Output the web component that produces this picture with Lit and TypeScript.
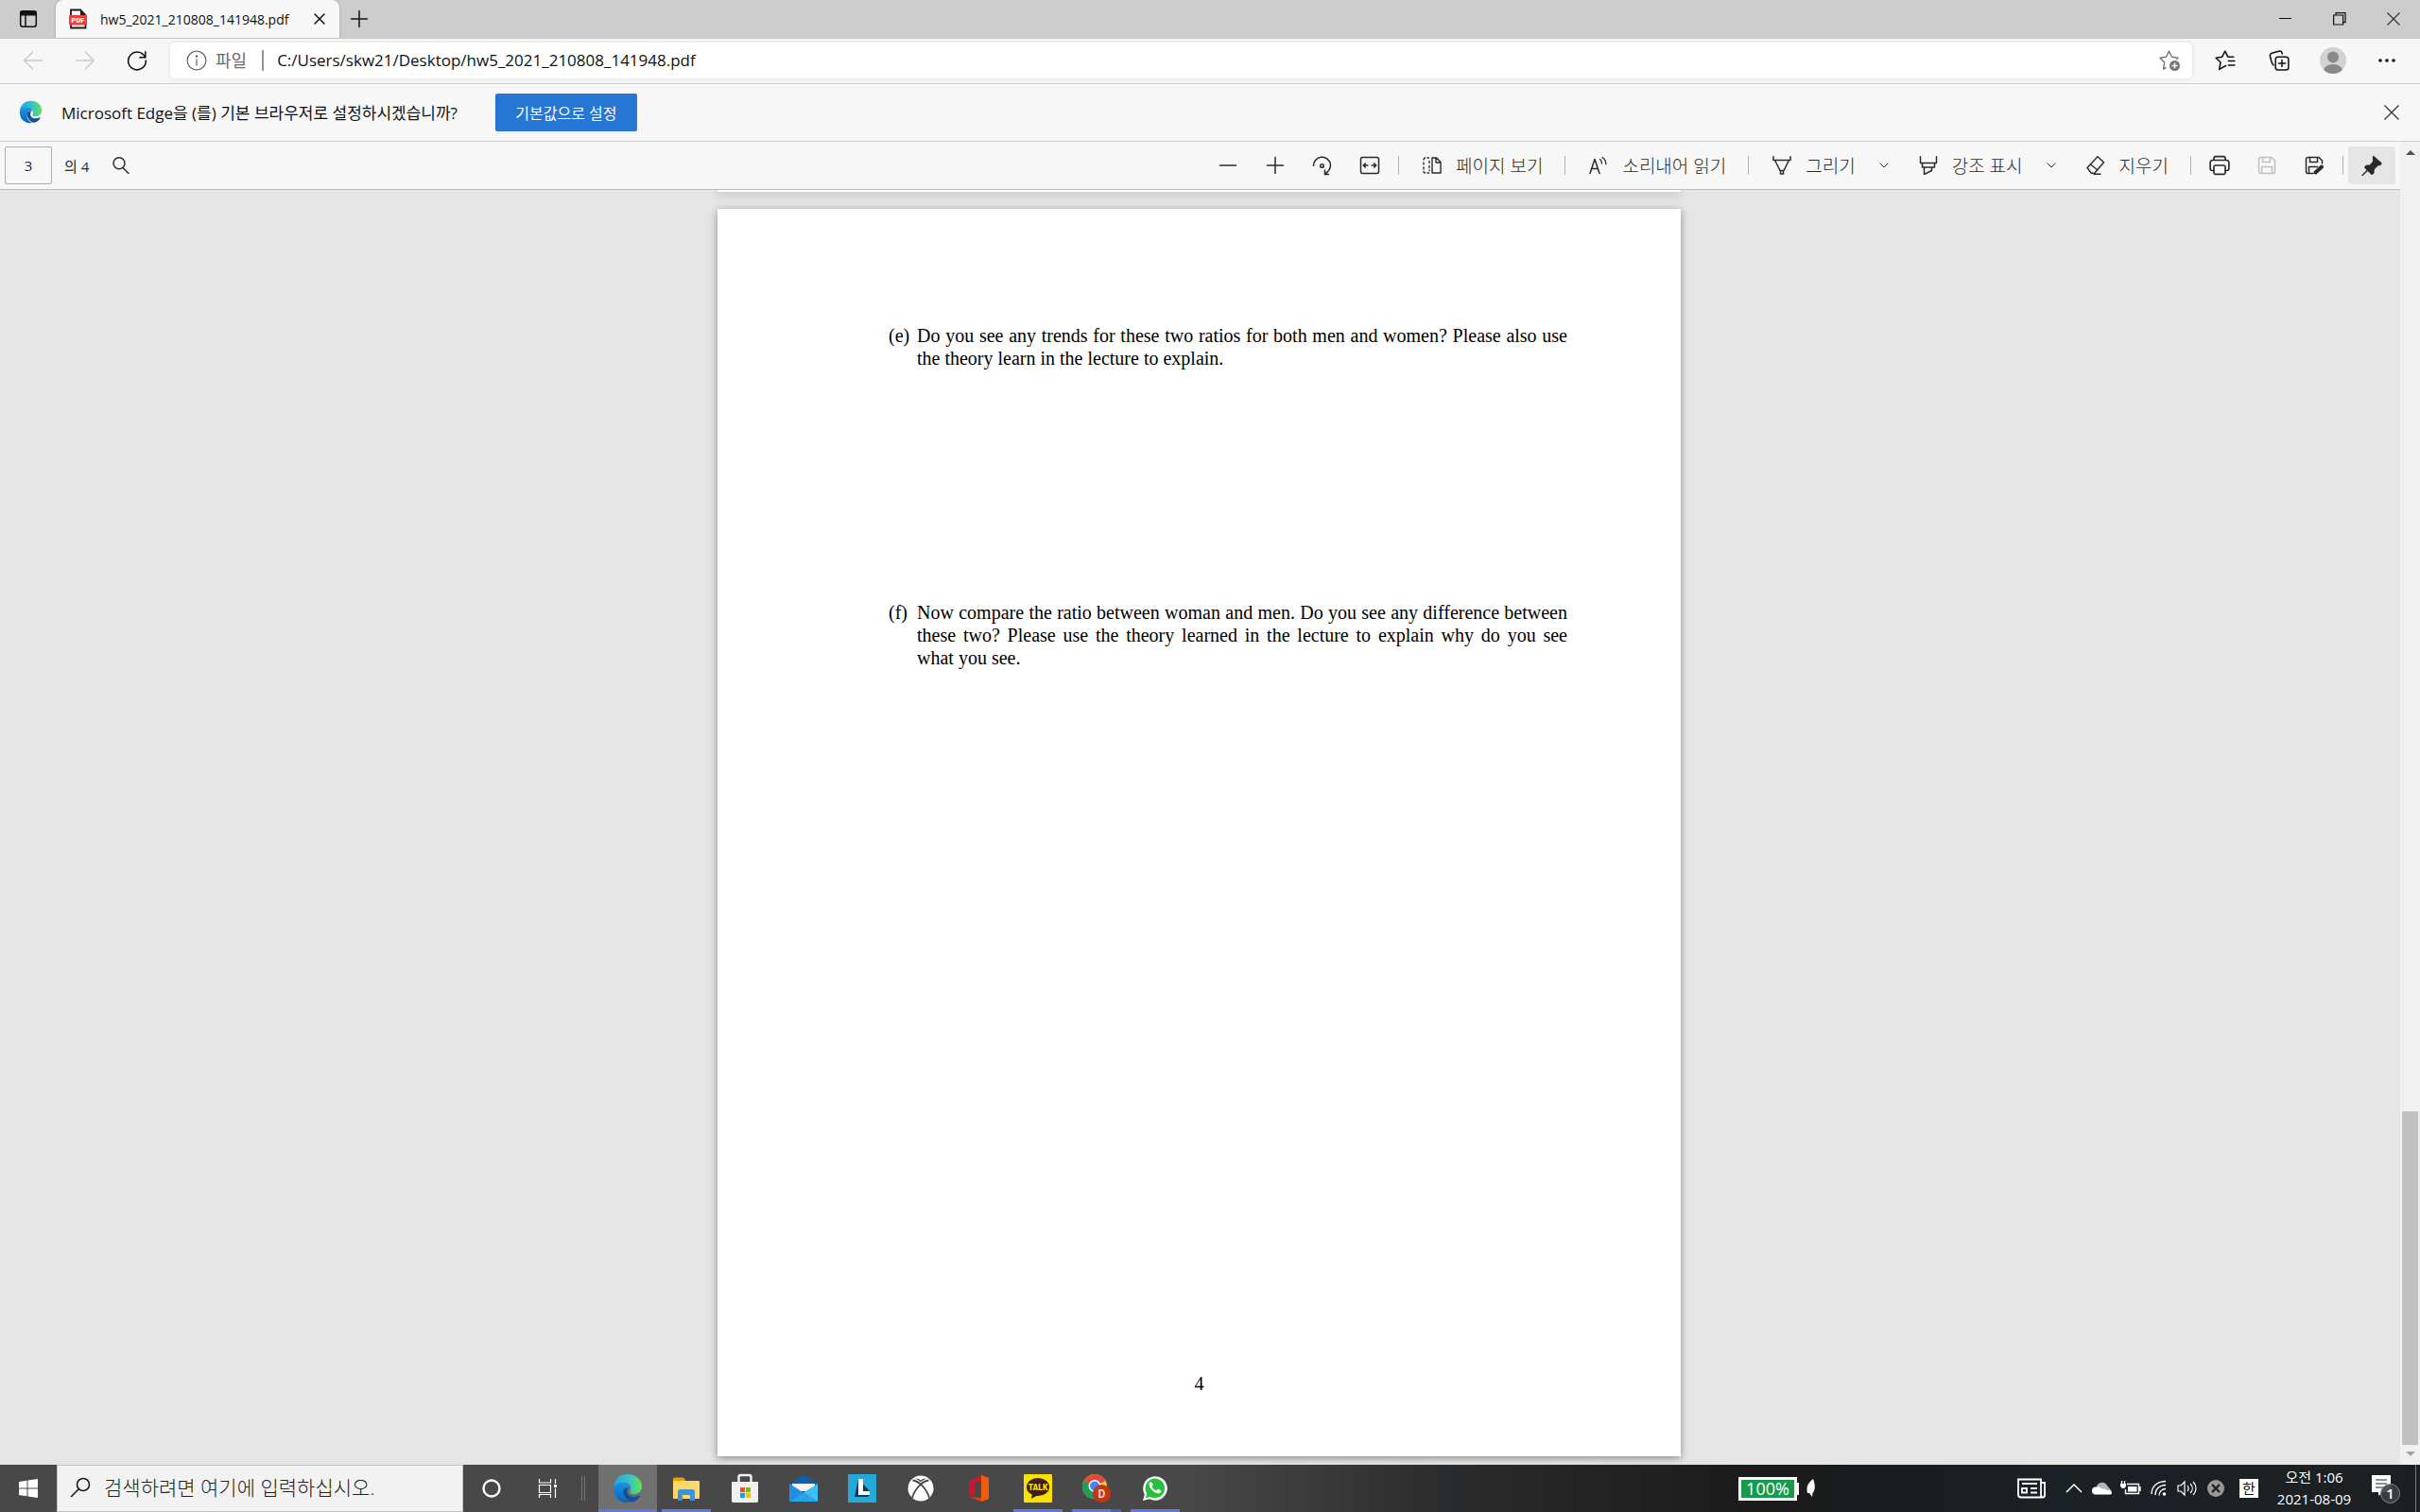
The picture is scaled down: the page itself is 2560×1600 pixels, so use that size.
import { LitElement, html, css, svg, nothing, TemplateResult } from "lit";
import { customElement, property, state } from "lit/decorators.js";
import { classMap } from "lit/directives/class-map.js";

const line = (size: number, body: TemplateResult, width = 1.5) => html`<svg
  width=${size}
  height=${size}
  viewBox="0 0 20 20"
  fill="none"
  stroke="currentColor"
  stroke-width=${width}
  stroke-linecap="round"
  stroke-linejoin="round"
  aria-hidden="true"
>${body}</svg>`;

const icons = {
  tabActions: line(20, svg`<rect x="1.7" y="1.7" width="16.6" height="16.6" rx="2.5"/><path d="M2 2.500h16v3.200H2z" fill="currentColor"/><path d="M7 6v12"/>`),
  close: line(20, svg`<path d="M5 5l10 10M15 5l-10 10"/>`),
  plus: line(20, svg`<path d="M10 1.500v17M1.500 10h17"/>`),
  minus: line(20, svg`<path d="M1.500 10h17"/>`),
  back: line(22, svg`<path d="M19 10H1.500M9.500 2L1.500 10l8 8"/>`, 1.2),
  forward: line(22, svg`<path d="M1 10h17.500M10.500 2l8 8-8 8"/>`, 1.2),
  reload: line(22, svg`<path d="M17.800 7A8.500 8.500 0 1 0 18.500 10"/><path d="M18 1.500V7h-5.500"/>`, 1.4),
  info: line(22, svg`<circle cx="10" cy="10" r="9"/><path d="M10 9v5.500"/><circle cx="10" cy="6" r=".6" fill="currentColor"/>`, 1.2),
  starAdd: html`<svg width="24" height="24" viewBox="0 0 24 24" fill="none" stroke="#767676" stroke-width="1.400" stroke-linejoin="round" aria-hidden="true"><path d="M8.500 19.500L5.500 21l1.200-7L2 9.200l6.500-1L11.500 2l3 6.200 6.500 1-1.500 1.800"/><circle cx="17.500" cy="17.500" r="5.500" fill="#767676" stroke="none"/><path d="M17.500 14.500v6M14.500 17.500h6" stroke="#fff"/></svg>`,
  favorites: line(22, svg`<path d="M10.500 15L4.200 18.500l1.300-6.700L1 7.500l6-1L9.800 1l2.700 5.500H18M13 10.500h6M13 14.500h6"/>`, 1.4),
  collections: line(22, svg`<rect x="6.500" y="6.500" width="12.500" height="12.500" rx="2.500"/><path d="M12.700 9.500v6.500M9.500 12.700H16M4.500 14.500C3 13.500 3.200 13 1.200 5.500 1 4 1.500 3.500 3 3l7.500-2C12 .8 12.500 1.500 13 3.500"/>`, 1.4),
  search: line(20, svg`<circle cx="8" cy="7.700" r="6"/><path d="M12 12.500l6 6"/>`),
  rotate: html`<svg width="22" height="22" viewBox="0 0 22 22" fill="none" stroke="currentColor" stroke-width="1.500" aria-hidden="true"><path d="M1.500 12A9 9 0 0 1 19.500 10.500C19.500 14.500 17 18 13.500 20M13.500 15.500v5h4.500"/><circle cx="10.500" cy="11.500" r="1.800"/></svg>`,
  fit: html`<svg width="22" height="20" viewBox="0 0 22 20" fill="none" stroke="currentColor" stroke-width="1.500" aria-hidden="true"><rect x="1.500" y="1.500" width="19" height="17" rx="2"/><path d="M9.500 10H4.500M6.800 7.500L4.300 10l2.500 2.500M12.500 10h5M15.200 7.500l2.500 2.500-2.500 2.500"/></svg>`,
  pageView: line(20, svg`<path d="M10 2h4.500L19 6.500V18h-9zM14 2v5h5"/><path d="M6.500 2H5M2.500 2C1.500 2.500 1 3 1 4M1 7v2M1 12v2M1 16.500c0 1 .5 1.500 1.500 1.500M5 18h1.500M7 5.500v2M7 10.500v2M7 15v.5"/>`, 1.4),
  read: line(20, svg`<path d="M1 18.500L6 3.500l5 15M2.800 13.500h6.500"/><path d="M11.500 3.500c1.500 1 2 2.500 2 4.500M14 1.500c2.500 1.700 3.800 4 3.800 7" stroke-width="1.300"/>`),
  draw: line(20, svg`<path d="M1 .8v3.700h18V.8M2.500 4.500L8 15.500h4l5.500-11M8.500 15.500V19h3v-3.500"/>`),
  highlight: line(20, svg`<path d="M1.500.8v6.700h17V.8M3.500 7.500V12h13V7.500M5.500 12v7.500l8-4V12"/>`),
  erase: line(20, svg`<path d="M1 12.500L12 .8l6.500 6L8.500 18.500 5 18zM4.500 9l7.500 6M8 19.200h7"/>`, 1.4),
  print: line(22, svg`<path d="M4.500 5V3.500C4.500 2 5 1.500 6 1.500h8c1 0 1.500.5 1.500 2V5M4.500 15H3c-1 0-2-1-2-2V7.500C1 6 2 5 3.500 5h13C18 5 19 6 19 7.500V13c0 1-1 2-2 2h-1.500"/><rect x="4.500" y="10" width="11" height="8.500" rx="1.500"/>`),
  save: line(20, svg`<path d="M3.500 1.500H15L18.500 5v11.500a2 2 0 0 1-2 2h-13a2 2 0 0 1-2-2v-13a2 2 0 0 1 2-2zM5.500 1.500v5h8v-5M4.500 18.500v-7h11v7"/>`),
  saveAs: line(20, svg`<path d="M9 18.500H3.500a2 2 0 0 1-2-2v-13a2 2 0 0 1 2-2H15L18.500 5v3M5.500 1.500v5h8v-5M4.500 18.500v-7h9"/><path d="M11.500 17.500l6.500-6" stroke-width="4"/>`),
  pin: line(22, svg`<path d="M11.500 1.500l7.500 6.500-1 1.500h-2l-4 4-.5 4L10 18.500 3.500 12l1-1.500 4-.5 3-3.500z" fill="currentColor"/><path d="M6.500 14L1 19.500"/>`, 1.3),
  chevronDown: line(10, svg`<path d="M2 6l8 8 8-8"/>`, 2),
  edge: (n: number) => html`<svg width=${n} height=${n} viewBox="0 0 32 32" aria-hidden="true">
    <defs>
      <linearGradient id="g1" x1="0" x2="1"><stop offset="0" stop-color="#1ea6e6"/><stop offset=".6" stop-color="#35c6c0"/><stop offset="1" stop-color="#6be04f"/></linearGradient>
      <linearGradient id="g2" x2="0" y2="1"><stop offset="0" stop-color="#1b95e0"/><stop offset="1" stop-color="#0a62c0"/></linearGradient>
    </defs>
    <path d="M1 16C1 7 8 1 16 1c9 0 15 6 15 13 0 5-4 8-8.500 8-3.500 0-5-1.500-4-3.200C21 15 18 10 11.500 10 6 10 2 13 1 16z" fill="url(#g1)"/>
    <path d="M1 16c1-4 5-6.500 10-6.500 5 0 8 3 8 6-4-2-8 1-8 5.500C11 26 15 30 19 30.500 8 33 1 25 1 16z" fill="url(#g2)"/>
    <path d="M11.500 18c-1.500 6 4 12 9 12.500 4-.5 7-3.500 8.500-6.500.3-.8-.4-1-1-.6-5 2.600-12.500 1.600-12.500-5 0-1.500.7-2.600 1.500-3.200-2.500-.4-4.700.8-5.500 2.800z" fill="#12509c"/>
  </svg>`,
};

const taskIcons: Record<string, TemplateResult> = {
  edge: icons.edge(32),
  folder: html`<svg width="30" height="30" viewBox="0 0 30 30" aria-hidden="true"><path d="M1 5a1.500 1.500 0 0 1 1.500-1.500H12L14 6l-2 4H1z" fill="#e3a008"/><rect x="1" y="7" width="28" height="19" rx="1" fill="#ffd769"/><path d="M6 28V18.500C6 17 7 16 8.500 16h13c1.500 0 2.500 1 2.500 2.500V28h-5v-6h-8v6z" fill="#3a94dc"/></svg>`,
  store: html`<svg width="30" height="32" viewBox="0 0 30 32" aria-hidden="true"><path d="M8.500 10V4c0-1.500.7-2 2-2h9c1.300 0 2 .5 2 2v6" fill="none" stroke="#f1f1f1" stroke-width="2.400"/><path d="M1 9h28v20c0 1.500-.8 2-2 2H3c-1.200 0-2-.5-2-2z" fill="#f1f1f1"/><path d="M10 15h5v5h-5z" fill="#f25022"/><path d="M16 15h5v5h-5z" fill="#7fba00"/><path d="M10 21h5v5h-5z" fill="#00a4ef"/><path d="M16 21h5v5h-5z" fill="#ffb900"/></svg>`,
  mail: html`<svg width="30" height="30" viewBox="0 0 30 30" aria-hidden="true"><path d="M0 10L15 1l15 9v5H0z" fill="#0a5fb0"/><path d="M3 10h24v8H3z" fill="#f4f4f4"/><path d="M0 10l30 19H1.500A1.500 1.500 0 0 1 0 27.500z" fill="#1f8fe0"/><path d="M30 10L15 19.500 30 29z" fill="#3cc0f5"/><path d="M15 19.500L0 29h30z" fill="#28a3ea"/></svg>`,
  learn: html`<svg width="30" height="30" viewBox="0 0 30 30" aria-hidden="true"><path d="M0 0h30v30H0z" fill="#27a9d8"/><path d="M11 5L7 24h14l2-2V18z" fill="#103a66"/><path d="M11 5h5v13h7v4H11z" fill="#fff"/></svg>`,
  xbox: html`<svg width="28" height="28" viewBox="0 0 28 28" aria-hidden="true"><circle cx="14" cy="14" r="13.500" fill="#fff"/><path d="M5.500 5.500C11 6 20 13 23 24M22.500 5.500C17 6 8 13 5 24" fill="none" stroke="#484848" stroke-width="1.800"/><path d="M8 3.500c2.500-.3 4.500.7 6 2 1.500-1.300 3.500-2.300 6-2-2 .8-4.500 2.500-6 4-1.500-1.500-4-3.200-6-4z" fill="#484848"/></svg>`,
  office: html`<svg width="30" height="30" viewBox="0 0 30 30" aria-hidden="true"><path d="M4 8L17 1l8 3v22l-8 3L5 24l12 1V6L10 9v12l-6 3z" fill="#e43b12"/><path d="M17 1l8 3v22l-8 3z" fill="#f25a10"/><path d="M4 8L17 1v5l-7 3v12l-6 3z" fill="#c5192d"/></svg>`,
  talk: html`<svg width="30" height="30" viewBox="0 0 30 30" aria-hidden="true"><rect width="30" height="30" rx="1" fill="#fae100"/><ellipse cx="15" cy="13.500" rx="12" ry="9.500" fill="#3b1e1e"/><path d="M9 20l-1 6 7-4z" fill="#3b1e1e"/><text x="15" y="17" font-family="Roboto,sans-serif" font-size="8.500" font-weight="900" text-anchor="middle" fill="#fae100">TALK</text></svg>`,
  chrome: html`<svg width="32" height="32" viewBox="0 0 32 32" aria-hidden="true"><circle cx="14" cy="14" r="13" fill="#f9c935"/><path d="M14 14L2.700 7.500A13 13 0 0 1 25.500 8z" fill="#dd4b3e"/><path d="M14 14v13A13 13 0 0 1 2.700 7.500z" fill="#1f9d57"/><circle cx="14" cy="13.500" r="6.500" fill="#fff"/><circle cx="14" cy="13.500" r="5" fill="#4285f4"/><circle cx="21.500" cy="21.500" r="9.500" fill="#c53610"/><text x="21.500" y="26" font-family="Roboto,sans-serif" font-size="12" font-weight="700" text-anchor="middle" fill="#ecd0c8">D</text></svg>`,
  whatsapp: html`<svg width="28" height="28" viewBox="0 0 28 28" aria-hidden="true"><path d="M1 27l1.800-6.800A12.800 12.800 0 1 1 8 25.300z" fill="#fff"/><path d="M4 24l1.200-4.500A10.300 10.300 0 1 1 9 23z" fill="#28c13f"/><path d="M10 7.500c-.6-.6-1.600-.2-2.200.8-1.500 3 3.500 10.500 9.200 11 2 .1 3.500-1.200 3.500-2.800l-3.600-1.900-1.600 1.700c-2.600-1-4-2.700-4.800-4.400l1.200-1.600z" fill="#fff"/></svg>`,
};

interface Task {
  id: string;
  label: string;
  active?: boolean;
  running?: boolean;
  stacked?: boolean;
}

const tasks: Task[] = [
  { id: "edge", label: "Microsoft Edge", active: true, running: true },
  { id: "folder", label: "파일 탐색기", running: true },
  { id: "store", label: "Microsoft Store" },
  { id: "mail", label: "메일" },
  { id: "learn", label: "L" },
  { id: "xbox", label: "Xbox" },
  { id: "office", label: "Office" },
  { id: "talk", label: "KakaoTalk", running: true },
  { id: "chrome", label: "Chrome", running: true, stacked: true },
  { id: "whatsapp", label: "WhatsApp", running: true },
];

const base = css`
  * { box-sizing: border-box; }
  button, input {
    font: inherit;
    color: inherit;
    border: 0;
    padding: 0;
    margin: 0;
    background: none;
    outline: none;
    min-width: 0;
  }
  button { display: flex; align-items: center; justify-content: center; flex: none; }
  svg { display: block; flex: none; }
`;

@customElement("browser-header")
export class BrowserHeader extends LitElement {
  @property() file = "";
  @property() url = "";
  @state() private prompt = true;

  static styles = [base, css`
    :host { display: block; flex: none; color: #111; }
    .strip { display: flex; height: 40px; background: #cdcdcd; }
    .tab-actions { width: 59px; }
    .tab { display: flex; align-items: center; width: 300px; padding: 0 11px 0 14px; background: #f7f7f7; border-radius: 8px 8px 0 0; box-shadow: 0 0 3px rgba(0, 0, 0, 0.25); clip-path: inset(0 -4px 0 -4px); font-size: 14px; }
    .title { flex: 1; margin-left: 13px; white-space: nowrap; overflow: hidden; text-align: left; }
    .new-tab { width: 42px; }
    .drag { flex: 1; }
    .win { width: 57px; }
    .bar { display: flex; align-items: center; height: 49px; padding: 0 7px 2px 7px; background: #f7f7f7; border-top: 1px solid #c4c4c4; border-bottom: 1px solid #cfcfcf; }
    .nav { width: 55px; height: 38px; }
    .nav[disabled] { color: #cacaca; }
    .address { display: flex; align-items: center; flex: 1; height: 38px; margin: 0 6px 0 8px; padding: 0 12px 0 17px; border-radius: 5px; background: #fff; box-shadow: 0 0 4px rgba(0, 0, 0, 0.12); font-size: 17px; }
    .scheme { display: flex; align-items: center; gap: 9px; padding-right: 16px; border-right: 2px solid #949494; color: #6c6c6c; font-size: 18px; line-height: 20px; }
    .url { flex: 1; margin-left: 14px; height: 30px; }
    .tool { width: 57px; height: 38px; }
    .prompt { display: flex; align-items: center; height: 61px; padding: 0 20px 1px; background: #f7f7f7; border-bottom: 1px solid #cfcfcf; font-size: 17px; }
    .question { margin: 0 40px 0 20px; }
    .accept { width: 150px; height: 40px; border-radius: 2px; background: #2876d4; color: #fff; font-size: 16px; }
    .dismiss { margin-left: auto; }
  `];

  render() {
    return html`
      <div class="strip">
        <button class="tab-actions" aria-label="탭 작업 메뉴">${icons.tabActions}</button>
        <div class="tab">
          <svg width="20" height="22" viewBox="0 0 20 22" aria-hidden="true">
            <path d="M2 1.500h10L17.500 7v13.500H2z" fill="#fff" stroke="#1a1a1a" stroke-width="1.800" />
            <path d="M12 1v6h6z" fill="#1a1a1a" />
            <rect x="0" y="7" width="19" height="10.500" rx="1" fill="#f23c3c" />
            <text x="9.500" y="15.200" text-anchor="middle" font-family="Roboto,sans-serif" font-size="7.500" font-weight="900" fill="#fff">PDF</text>
          </svg>
          <span class="title">${this.file}</span>
          <button aria-label="탭 닫기">${icons.close}</button>
        </div>
        <button class="new-tab" aria-label="새 탭">${icons.plus}</button>
        <div class="drag"></div>
        <button class="win" aria-label="최소화"><svg width="14" height="14" viewBox="0 0 14 14"><path d="M0 6.500h13" stroke="#111" /></svg></button>
        <button class="win" aria-label="복원"><svg width="14" height="14" viewBox="0 0 14 14" fill="none" stroke="#111" stroke-width="1.200"><path d="M.6 3h10v10H.6zM3 3V.6h10v10h-2.400" /></svg></button>
        <button class="win" aria-label="닫기"><svg width="14" height="14" viewBox="0 0 14 14" fill="none" stroke="#333" stroke-width="1.200"><path d="M.5.5l13 13M13.500.5l-13 13" /></svg></button>
      </div>
      <div class="bar">
        <button class="nav" disabled aria-label="뒤로">${icons.back}</button>
        <button class="nav" disabled aria-label="앞으로">${icons.forward}</button>
        <button class="nav" aria-label="새로 고침">${icons.reload}</button>
        <div class="address">
          <span class="scheme">${icons.info}<span>파일</span></span>
          <input class="url" aria-label="주소" .value=${this.url} />
          <button aria-label="즐겨찾기에 추가">${icons.starAdd}</button>
        </div>
        <button class="tool" aria-label="즐겨찾기">${icons.favorites}</button>
        <button class="tool" aria-label="컬렉션">${icons.collections}</button>
        <button class="tool" aria-label="프로필">
          <svg width="28" height="28" viewBox="0 0 28 28"><defs><clipPath id="c"><circle cx="14" cy="14" r="14" /></clipPath></defs><g clip-path="url(#c)"><path d="M0 0h28v28H0z" fill="#d4d2d0" /><circle cx="14" cy="10.500" r="6" fill="#8a8886" /><ellipse cx="14" cy="25" rx="10" ry="7" fill="#8a8886" /></g></svg>
        </button>
        <button class="tool" aria-label="설정 및 기타"><svg width="18" height="4" viewBox="0 0 18 4"><circle cx="2" cy="2" r="1.800" /><circle cx="9" cy="2" r="1.800" /><circle cx="16" cy="2" r="1.800" /></svg></button>
      </div>
      ${this.prompt
        ? html`<div class="prompt">
            ${icons.edge(25)}
            <span class="question">Microsoft Edge을 (를) 기본 브라우저로 설정하시겠습니까?</span>
            <button class="accept">기본값으로 설정</button>
            <button class="dismiss" aria-label="닫기" @click=${() => (this.prompt = false)}>
              <svg width="20" height="20" viewBox="0 0 20 20" fill="none" stroke="#333" stroke-width="1.300"><path d="M2.500 2.500l15 15M17.500 2.500l-15 15" /></svg>
            </button>
          </div>`
        : nothing}
    `;
  }
}

@customElement("pdf-toolbar")
export class PdfToolbar extends LitElement {
  @property({ type: Number }) page = 1;
  @property({ type: Number }) total = 1;

  static styles = [base, css`
    :host { display: flex; flex: none; align-items: center; height: 51px; padding: 0 5px; background: #f7f7f7; border-bottom: 1px solid #bdbdbd; color: #2a2a2a; font-size: 19px; white-space: nowrap; }
    .pager { display: flex; align-items: center; font-size: 15px; }
    .page { width: 50px; height: 40px; margin-right: 13px; border: 1px solid #adadad; border-radius: 2px; text-align: center; }
    .find { margin-left: 9px; width: 50px; height: 40px; }
    .grow { flex: 1; }
    .icon { width: 50px; height: 40px; border-radius: 3px; }
    .icon.on { background: #e5e5e5; }
    .icon[disabled] { color: #c0c0c0; }
    .text { gap: 15px; height: 40px; padding: 0 18px 0 20px; font-weight: 300; }
    .more { width: 29px; height: 40px; padding-right: 5px; }
    .sep { flex: none; width: 1px; height: 20px; margin: 0 5px; background: #b4b4b4; }
  `];

  private icon(label: string, glyph: TemplateResult, extra: Record<string, boolean> = {}) {
    return html`<button class=${classMap({ icon: true, on: !!extra.on })} ?disabled=${!!extra.disabled} aria-label=${label}>${glyph}</button>`;
  }

  private action(label: string, glyph: TemplateResult, split = false) {
    return html`<button class="text">${glyph}<span>${label}</span></button>
      ${split ? html`<button class="more" aria-label="${label} 옵션">${icons.chevronDown}</button>` : nothing}`;
  }

  render() {
    const sep = html`<span class="sep"></span>`;
    return html`
      <div class="pager">
        <input class="page" id="page" .value=${String(this.page)} />
        <label for="page">의 ${this.total}</label>
      </div>
      <button class="find" aria-label="찾기">${icons.search}</button>
      <div class="grow"></div>
      ${this.icon("축소", icons.minus)}
      ${this.icon("확대", icons.plus)}
      ${this.icon("회전", icons.rotate)}
      ${this.icon("너비에 맞춤", icons.fit)}
      ${sep}${this.action("페이지 보기", icons.pageView)}
      ${sep}${this.action("소리내어 읽기", icons.read)}
      ${sep}${this.action("그리기", icons.draw, true)}
      ${this.action("강조 표시", icons.highlight, true)}
      ${this.action("지우기", icons.erase)}
      ${sep}
      ${this.icon("인쇄", icons.print)}
      ${this.icon("저장", icons.save, { disabled: true })}
      ${this.icon("다른 이름으로 저장", icons.saveAs)}
      ${sep}${this.icon("도구 모음 고정", icons.pin, { on: true })}
    `;
  }
}

@customElement("pdf-page")
export class PdfPage extends LitElement {
  static styles = [base, css`
    :host { display: flex; flex-direction: column; flex: none; width: 100%; max-width: 1019px; aspect-ratio: 1019 / 1320; padding-top: 122px; background: #fff; box-shadow: 0 2px 8px rgba(0, 0, 0, 0.4); color: #000; font-family: "Liberation Serif", "Times New Roman", serif; font-size: 20px; line-height: 24px; }
    .questions { display: flex; flex-direction: column; gap: 245px; margin: 0; padding: 0 120px 0 181px; list-style: none; }
    .question { display: grid; grid-template-columns: 30px 1fr; }
    .body { margin: 0; text-align: justify; }
    .folio { margin: auto 0 65px; text-align: center; }
  `];

  render() {
    return html`
      <ol class="questions">
        <li class="question">
          <span>(e)</span>
          <p class="body">Do you see any trends for these two ratios for both men and women? Please also use the theory learn in the lecture to explain.</p>
        </li>
        <li class="question">
          <span>(f)</span>
          <p class="body">Now compare the ratio between woman and men. Do you see any difference between these two? Please use the theory learned in the lecture to explain why do you see what you see.</p>
        </li>
      </ol>
      <div class="folio">4</div>
    `;
  }
}

@customElement("task-bar")
export class TaskBar extends LitElement {
  static styles = [base, css`
    :host { display: flex; flex: none; height: 50px; background: linear-gradient(90deg, #484848 0, #484848 49%, #2a2b2c 60%, #1a1a1a 73%, #1c2125 85%, #1c2022 100%); color: #fff; font-size: 15px; }
    .start, .sys { width: 60px; }
    .search { display: flex; align-items: center; gap: 14px; width: 430px; padding: 0 14px 2px 13px; background: #f2f2f2; border: 1px solid #c0c0c0; color: #222; }
    .query { flex: 1; height: 40px; font-size: 21px; font-weight: 300; }
    .query::placeholder { color: #222; opacity: 1; }
    .grip { align-self: center; width: 4px; height: 26px; margin: 0 14px 0 5px; border: solid #757575; border-width: 0 1px; }
    .task { width: 62px; border-bottom: 3px solid transparent; padding-top: 3px; }
    .task.active { background: #707070; }
    .task.running { border-image: linear-gradient(90deg, transparent 5px, #6379d8 5px, #6379d8 57px, transparent 57px) 0 0 3 0; }
    .task.active.running { border-image: none; border-bottom-color: #6379d8; }
    .task.stacked { border-image: linear-gradient(90deg, transparent 5px, #6379d8 5px, #6379d8 46px, #4c5fb4 46px, #4c5fb4 57px, transparent 57px) 0 0 3 0; }
    .grow { flex: 1; }
    .meter { display: flex; align-items: center; gap: 8px; margin-right: 213px; }
    .cell { display: flex; align-items: center; }
    .charge { width: 62px; height: 25px; border: 3px solid #fff; background: #189a4c; font-size: 18px; line-height: 19px; text-align: center; }
    .nub { width: 2px; height: 13px; background: #fff; }
    .news { width: 30px; margin-right: 15px; }
    .tray { width: 30px; }
    .ime { width: 20px; height: 20px; align-self: center; margin: 0 14px 0 10px; background: #fff; color: #111; font-size: 15px; line-height: 20px; }
    .clock { flex-direction: column; width: 90px; line-height: 23px; white-space: nowrap; }
    .notify { width: 62px; }
    .peek { width: 5px; border-left: 1px solid #777; }
  `];

  render() {
    return html`
      <button class="start" aria-label="시작"><svg width="20" height="20" viewBox="0 0 20 20" fill="#fff"><path d="M0 3l8.500-1.300v7.800H0zM9.500 1.500L20 0v9.500H9.500zM0 10.500h8.500v7.800L0 17zM9.500 10.500H20V20L9.500 18.500z" /></svg></button>
      <label class="search">
        <svg width="22" height="22" viewBox="0 0 22 22" fill="none" stroke="#1a1a1a" stroke-width="1.600"><circle cx="14" cy="8" r="6.500" /><path d="M9.500 12.500L1 21" /></svg>
        <input class="query" aria-label="검색" placeholder="검색하려면 여기에 입력하십시오." />
      </label>
      <button class="sys" aria-label="Cortana"><svg width="22" height="22" viewBox="0 0 22 22" fill="none" stroke="#fff" stroke-width="2.400"><circle cx="11" cy="11" r="8.500" /></svg></button>
      <button class="sys" aria-label="작업 보기"><svg width="22" height="20" viewBox="0 0 22 20" fill="none" stroke="#fff" stroke-width="1.200"><path d="M1.500 0v4h12V0M1.500 6.500h12v8h-12zM1.500 20v-3.500h12V20M18.500 0v5M18.500 10v10" /><path d="M17 6h3v3h-3z" fill="#fff" stroke="none" /></svg></button>
      <span class="grip"></span>
      ${tasks.map((t) => html`<button
        class=${classMap({ task: true, active: !!t.active, running: !!t.running, stacked: !!t.stacked })}
        aria-label=${t.label}
      >${taskIcons[t.id]}</button>`)}
      <div class="grow"></div>
      <div class="meter">
        <div class="cell"><div class="charge">100%</div><div class="nub"></div></div>
        <svg width="10" height="20" viewBox="0 0 10 20" fill="#fff"><path d="M7 0C0 6 0 9 1 15h2l3 4 .5-4C10 11 9 5 7 0z" /></svg>
      </div>
      <button class="news" aria-label="뉴스"><svg width="30" height="22" viewBox="0 0 30 22" fill="none" stroke="#fff" stroke-width="1.800"><path d="M1 1.500h24v16c0 2 1 3 2 3H4c-2 0-3-1-3-3zM25 5h4v13c0 1.500-1 2.500-2 2.500M5 6h16M14 11h7M14 15.500h7" /><path d="M5 11h5v4.500H5z" /></svg></button>
      <button class="tray" aria-label="숨겨진 아이콘 표시"><svg width="18" height="10" viewBox="0 0 18 10" fill="none" stroke="#fff" stroke-width="1.500"><path d="M1 9l8-8 8 8" /></svg></button>
      <button class="tray" aria-label="OneDrive"><svg width="22" height="14" viewBox="0 0 22 14"><path d="M5 5a6 6 0 0 1 11-1l5 6-8 2z" fill="#b5b5b5" /><path d="M4 13.500a4 4 0 0 1 0-8c3-.8 5 .5 7 2.200 2-.8 4 0 5 1.300 3-.5 5 1 5 2.700 0 1-1 1.800-2 1.800z" fill="#fff" /></svg></button>
      <button class="tray" aria-label="배터리"><svg width="22" height="16" viewBox="0 0 22 16" fill="none" stroke="#fff"><path d="M7 3.500h12.500v10h-14V9M21 6v5M1.500 0v3M4.500 0v3" stroke-width="1.400" /><path d="M8 6h9.500v5.500H8zM0 3h6v3L4 8H2L0 6z" fill="#fff" stroke="none" /></svg></button>
      <button class="tray" aria-label="네트워크"><svg width="18" height="18" viewBox="0 0 18 18" fill="none" stroke="#fff" stroke-width="1.300"><path d="M1 15C1 7 7 1.500 16 1.500M5 16C5 10 9 5.500 16 5.500M9 16.500c0-4 3-7 7-7" /><circle cx="14.500" cy="15" r="1.800" fill="#fff" stroke="none" /></svg></button>
      <button class="tray" aria-label="볼륨"><svg width="22" height="18" viewBox="0 0 22 18" fill="none" stroke="#fff" stroke-width="1.200"><path d="M1 6h3l4-4v14l-4-4H1zM11 6c1.500 2 1.500 4 0 6M14 4c3 3 3 7 0 10M17 2c4 4 4 10 0 14" /></svg></button>
      <button class="tray" aria-label="상태"><svg width="18" height="18" viewBox="0 0 18 18"><circle cx="9" cy="9" r="9" fill="#999" /><path d="M5 5l8 8M13 5l-8 8" stroke="#1c2022" stroke-width="2.400" /></svg></button>
      <button class="ime">한</button>
      <button class="clock"><span>오전 1:06</span><span>2021-08-09</span></button>
      <button class="notify" aria-label="알림 1개"><svg width="32" height="32" viewBox="0 0 32 32"><path d="M1 2h20v18h-9l-4 4v-4H1z" fill="#fff" /><path d="M5 7h12M5 11h12M5 15h9" stroke="#1c2022" /><circle cx="20.500" cy="21.500" r="10" fill="#3c4042" fill-opacity=".9" stroke="#8a8a8a" /><text x="20.500" y="27" font-size="15" font-weight="600" text-anchor="middle" fill="#fff">1</text></svg></button>
      <span class="peek"></span>
    `;
  }
}

@customElement("app-root")
export class AppRoot extends LitElement {
  static styles = [base, css`
    :host { display: flex; flex-direction: column; height: 100vh; overflow: hidden; font-family: "Open Sans", "Noto Sans CJK KR", sans-serif; background: #e5e5e5; }
    .work { display: flex; flex: 1; min-height: 0; }
    .document { display: flex; flex-direction: column; flex: 1; min-width: 0; }
    .viewer { display: flex; flex-direction: column; align-items: center; gap: 18px; flex: 1; min-height: 0; padding-right: 2px; overflow: hidden; background: #e5e5e5; }
    .previous { flex: none; width: 100%; max-width: 1019px; height: 2px; background: #fff; box-shadow: 0 2px 8px rgba(0, 0, 0, 0.4); }
    .scroll { display: flex; flex-direction: column; align-items: center; width: 21px; padding: 9px 0; background: #f1f1f1; }
    .room { flex: 1008; }
    .thumb { flex: 351; width: 17px; background: #c1c1c1; }
    .low { flex: none; margin-top: 7px; }
  `];

  render() {
    return html`
      <browser-header file="hw5_2021_210808_141948.pdf" url="C:/Users/skw21/Desktop/hw5_2021_210808_141948.pdf"></browser-header>
      <main class="work">
        <div class="document">
          <pdf-toolbar .page=${3} .total=${4}></pdf-toolbar>
          <div class="viewer">
            <div class="previous"></div>
            <pdf-page></pdf-page>
          </div>
        </div>
        <div class="scroll">
          <svg width="10" height="5" viewBox="0 0 10 5"><path d="M0 5l5-5 5 5z" fill="#505050" /></svg>
          <div class="room"></div>
          <div class="thumb"></div>
          <svg class="low" width="10" height="5" viewBox="0 0 10 5"><path d="M0 0l5 5 5-5z" fill="#a3a3a3" /></svg>
        </div>
      </main>
      <task-bar></task-bar>
    `;
  }
}
